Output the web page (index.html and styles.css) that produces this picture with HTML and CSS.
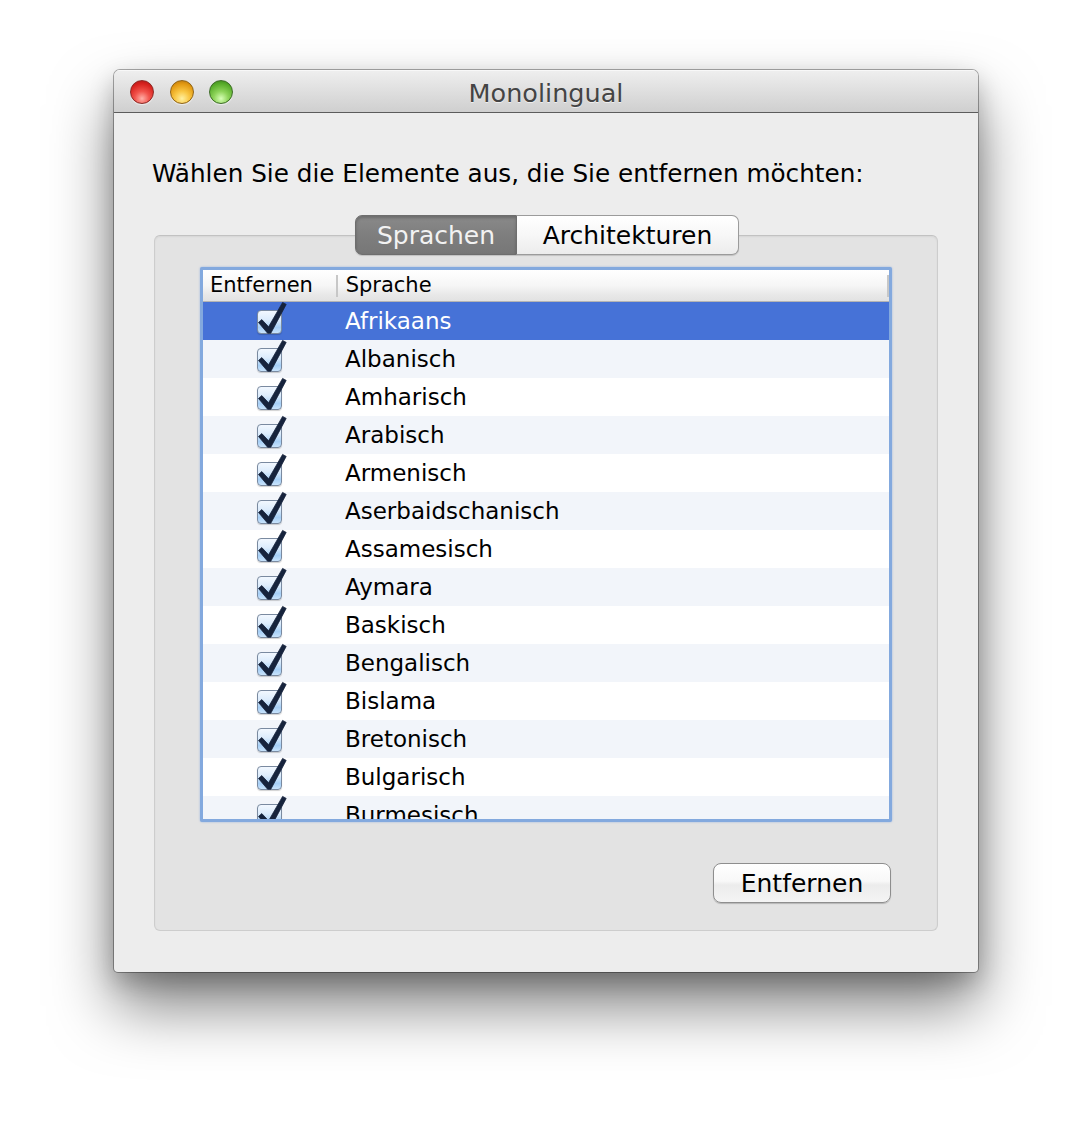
FILE: index.html
```html
<!DOCTYPE html>
<html lang="de">
<head>
<meta charset="utf-8">
<title>Monolingual</title>
<link rel="stylesheet" href="styles.css">
</head>
<body>
<div class="window">
  <div class="titlebar">
    <div class="lights">
      <span class="light red"></span>
      <span class="light yellow"></span>
      <span class="light green"></span>
    </div>
    <div class="title">Monolingual</div>
  </div>
  <div class="content">
    <p class="prompt">Wählen Sie die Elemente aus, die Sie entfernen möchten:</p>
    <div class="tabs">
      <span class="tab selected">Sprachen</span>
      <span class="tab">Architekturen</span>
    </div>
    <div class="panel">
      <div class="table">
        <div class="thead">
          <div class="th th-check">Entfernen</div>
          <div class="th th-name">Sprache</div>
        </div>
        <div class="tbody">
          <div class="row selected"><div class="cell-check"><span class="box"><svg class="check" viewBox="0 0 32 32"><path d="M1.5 12.5 L4.8 9.6 L11.6 16.8 L25.6 -7.6 L29.2 -5.6 L13.8 23.2 L10.6 23.2 Z"/></svg></span></div><div class="cell-name">Afrikaans</div></div>
          <div class="row"><div class="cell-check"><span class="box"><svg class="check" viewBox="0 0 32 32"><path d="M1.5 12.5 L4.8 9.6 L11.6 16.8 L25.6 -7.6 L29.2 -5.6 L13.8 23.2 L10.6 23.2 Z"/></svg></span></div><div class="cell-name">Albanisch</div></div>
          <div class="row"><div class="cell-check"><span class="box"><svg class="check" viewBox="0 0 32 32"><path d="M1.5 12.5 L4.8 9.6 L11.6 16.8 L25.6 -7.6 L29.2 -5.6 L13.8 23.2 L10.6 23.2 Z"/></svg></span></div><div class="cell-name">Amharisch</div></div>
          <div class="row"><div class="cell-check"><span class="box"><svg class="check" viewBox="0 0 32 32"><path d="M1.5 12.5 L4.8 9.6 L11.6 16.8 L25.6 -7.6 L29.2 -5.6 L13.8 23.2 L10.6 23.2 Z"/></svg></span></div><div class="cell-name">Arabisch</div></div>
          <div class="row"><div class="cell-check"><span class="box"><svg class="check" viewBox="0 0 32 32"><path d="M1.5 12.5 L4.8 9.6 L11.6 16.8 L25.6 -7.6 L29.2 -5.6 L13.8 23.2 L10.6 23.2 Z"/></svg></span></div><div class="cell-name">Armenisch</div></div>
          <div class="row"><div class="cell-check"><span class="box"><svg class="check" viewBox="0 0 32 32"><path d="M1.5 12.5 L4.8 9.6 L11.6 16.8 L25.6 -7.6 L29.2 -5.6 L13.8 23.2 L10.6 23.2 Z"/></svg></span></div><div class="cell-name">Aserbaidschanisch</div></div>
          <div class="row"><div class="cell-check"><span class="box"><svg class="check" viewBox="0 0 32 32"><path d="M1.5 12.5 L4.8 9.6 L11.6 16.8 L25.6 -7.6 L29.2 -5.6 L13.8 23.2 L10.6 23.2 Z"/></svg></span></div><div class="cell-name">Assamesisch</div></div>
          <div class="row"><div class="cell-check"><span class="box"><svg class="check" viewBox="0 0 32 32"><path d="M1.5 12.5 L4.8 9.6 L11.6 16.8 L25.6 -7.6 L29.2 -5.6 L13.8 23.2 L10.6 23.2 Z"/></svg></span></div><div class="cell-name">Aymara</div></div>
          <div class="row"><div class="cell-check"><span class="box"><svg class="check" viewBox="0 0 32 32"><path d="M1.5 12.5 L4.8 9.6 L11.6 16.8 L25.6 -7.6 L29.2 -5.6 L13.8 23.2 L10.6 23.2 Z"/></svg></span></div><div class="cell-name">Baskisch</div></div>
          <div class="row"><div class="cell-check"><span class="box"><svg class="check" viewBox="0 0 32 32"><path d="M1.5 12.5 L4.8 9.6 L11.6 16.8 L25.6 -7.6 L29.2 -5.6 L13.8 23.2 L10.6 23.2 Z"/></svg></span></div><div class="cell-name">Bengalisch</div></div>
          <div class="row"><div class="cell-check"><span class="box"><svg class="check" viewBox="0 0 32 32"><path d="M1.5 12.5 L4.8 9.6 L11.6 16.8 L25.6 -7.6 L29.2 -5.6 L13.8 23.2 L10.6 23.2 Z"/></svg></span></div><div class="cell-name">Bislama</div></div>
          <div class="row"><div class="cell-check"><span class="box"><svg class="check" viewBox="0 0 32 32"><path d="M1.5 12.5 L4.8 9.6 L11.6 16.8 L25.6 -7.6 L29.2 -5.6 L13.8 23.2 L10.6 23.2 Z"/></svg></span></div><div class="cell-name">Bretonisch</div></div>
          <div class="row"><div class="cell-check"><span class="box"><svg class="check" viewBox="0 0 32 32"><path d="M1.5 12.5 L4.8 9.6 L11.6 16.8 L25.6 -7.6 L29.2 -5.6 L13.8 23.2 L10.6 23.2 Z"/></svg></span></div><div class="cell-name">Bulgarisch</div></div>
          <div class="row"><div class="cell-check"><span class="box"><svg class="check" viewBox="0 0 32 32"><path d="M1.5 12.5 L4.8 9.6 L11.6 16.8 L25.6 -7.6 L29.2 -5.6 L13.8 23.2 L10.6 23.2 Z"/></svg></span></div><div class="cell-name">Burmesisch</div></div>
        </div>
      </div>
      <div class="actions">
        <button class="button">Entfernen</button>
      </div>
    </div>
  </div>
</div>
</body>
</html>
```

FILE: styles.css
```css
html, body {
  margin: 0;
  padding: 0;
  background: #ffffff;
}

body {
  font-family: "DejaVu Sans", "Liberation Sans", sans-serif;
  color: #000;
  min-height: 1130px;
  padding-top: 70px;
  padding-bottom: 158px;
  box-sizing: border-box;
}

.window {
  width: 864px;
  height: 902px;
  margin: 0 0 0 114px;
  background: #ededed;
  border-radius: 6px 6px 4px 4px;
  box-shadow: 0 0 0 1px rgba(0, 0, 0, 0.32), 0 34px 62px rgba(0, 0, 0, 0.5), 0 10px 24px rgba(0, 0, 0, 0.22);
  overflow: hidden;
  display: flex;
  flex-direction: column;
}

.titlebar {
  position: relative;
  height: 42px;
  flex: none;
  background: linear-gradient(to bottom, #efefef 0%, #e2e2e2 40%, #cfcfcf 100%);
  border-bottom: 1px solid #5c5c5c;
  box-shadow: inset 0 1px 0 #f8f8f8;
  display: flex;
  align-items: center;
  justify-content: center;
}

.lights {
  position: absolute;
  left: 16px;
  top: 10px;
  display: flex;
  gap: 15.5px;
}

.light {
  width: 24px;
  height: 24px;
  border-radius: 50%;
  box-sizing: border-box;
  box-shadow: 0 1px 1px rgba(255, 255, 255, 0.6);
}

.light.red {
  background: radial-gradient(circle at 50% 80%, #ffb0a8 0%, #f2544c 35%, #d8231f 70%, #a81010 100%);
  border: 1px solid #8c2a26;
}

.light.yellow {
  background: radial-gradient(circle at 50% 80%, #fff0a0 0%, #f9c744 35%, #e39a12 70%, #b06a06 100%);
  border: 1px solid #8f6418;
}

.light.green {
  background: radial-gradient(circle at 50% 80%, #d8ffb8 0%, #8ed45a 35%, #5aae2c 70%, #357d14 100%);
  border: 1px solid #3e6d28;
}

.title {
  font-size: 25.5px;
  color: #444444;
  text-shadow: 0 1px 0 rgba(255, 255, 255, 0.6);
  margin-top: 4px;
}

.content {
  flex: 1;
  padding: 0 40px;
  display: flex;
  flex-direction: column;
}

.prompt {
  margin: 46px 0 0 -2px;
  font-size: 24.7px;
  line-height: 30px;
}

.tabs {
  position: relative;
  z-index: 1;
  align-self: flex-start;
  margin: 26px 0 -20px 201px;
  display: flex;
  height: 40px;
  border-radius: 7px;
  box-shadow: 0 1px 1px rgba(0, 0, 0, 0.15);
}

.tab {
  box-sizing: border-box;
  height: 40px;
  display: flex;
  align-items: center;
  justify-content: center;
  font-size: 25px;
  width: 222px;
  background: linear-gradient(to bottom, #ffffff 0%, #f7f7f7 50%, #ececec 100%);
  border: 1px solid #9b9b9b;
  border-left: none;
  border-radius: 0 7px 7px 0;
  color: #000;
}

.tab.selected {
  width: 162px;
  background: linear-gradient(to bottom, #8a8a8a 0%, #7e7e7e 50%, #777777 100%);
  border: 1px solid #6e6e6e;
  border-radius: 7px 0 0 7px;
  color: #f2f2f2;
  box-shadow: inset 0 2px 3px rgba(0, 0, 0, 0.22);
}

.panel {
  height: 696px;
  box-sizing: border-box;
  background: #e3e3e3;
  border: 1px solid #cdcdcd;
  border-top-color: #c2c2c2;
  border-radius: 6px;
  box-shadow: inset 0 1px 2px rgba(0, 0, 0, 0.06);
  padding: 31px 45px 27px 45px;
  display: flex;
  flex-direction: column;
}

.table {
  height: 555px;
  box-sizing: border-box;
  border: 3px solid #83a9de;
  border-radius: 2px;
  box-shadow: 0 0 2px rgba(90, 140, 220, 0.6);
  background: #ffffff;
  overflow: hidden;
  display: flex;
  flex-direction: column;
}

.thead {
  flex: none;
  height: 31px;
  display: flex;
  background: linear-gradient(to bottom, #ffffff 0%, #f6f6f6 50%, #e8e8e8 80%, #e2e2e2 100%);
  border-bottom: 1px solid #b4b4b4;
}

.th {
  font-size: 21px;
  line-height: 31px;
  padding-left: 7px;
  box-sizing: border-box;
  color: #000;
}

.th-check {
  width: 135px;
  position: relative;
}

.th-check::after,
.th-name::after {
  content: "";
  position: absolute;
  right: 0;
  top: 5px;
  bottom: 4px;
  width: 2px;
  background: #c7c7c7;
}

.th-name {
  position: relative;
  width: 553px;
  padding-left: 8px;
}

.tbody {
  flex: 1;
  overflow: hidden;
}

.row {
  display: flex;
  height: 38px;
  background: #ffffff;
}

.row:nth-child(even) {
  background: #f2f5fa;
}

.row.selected {
  background: #4672d7;
}

.cell-check {
  width: 135px;
  flex: none;
  padding-left: 54px;
  box-sizing: border-box;
}

.box {
  position: relative;
  display: block;
  margin-top: 8px;
  width: 25px;
  height: 24px;
  box-sizing: border-box;
  border: 1px solid #7a8aa0;
  border-radius: 4px;
  background: linear-gradient(to bottom, #f2f8ff 0%, #dcecfc 40%, #a6cff6 75%, #c8e3fc 100%);
  box-shadow: 0 1px 1px rgba(0, 0, 0, 0.18);
}

.check {
  position: absolute;
  left: -1px;
  top: -1px;
  width: 32px;
  height: 32px;
  overflow: visible;
}

.check path {
  fill: #16233c;
  stroke: #16233c;
  stroke-width: 0.8;
  stroke-linejoin: round;
}

.cell-name {
  font-size: 23px;
  line-height: 38px;
  padding-left: 7px;
  color: #000;
}

.row.selected .cell-name {
  color: #ffffff;
}

.actions {
  margin-top: 41px;
  display: flex;
  justify-content: flex-end;
  padding-right: 1px;
}

.button {
  width: 178px;
  height: 40px;
  box-sizing: border-box;
  font-family: "DejaVu Sans", "Liberation Sans", sans-serif;
  font-size: 25px;
  color: #000;
  background: linear-gradient(to bottom, #ffffff 0%, #f8f8f8 45%, #ececec 55%, #f4f4f4 100%);
  border: 1px solid #8e8e8e;
  border-radius: 8px;
  box-shadow: 0 1px 1px rgba(0, 0, 0, 0.2);
  padding: 0;
  margin: 0;
}
```
